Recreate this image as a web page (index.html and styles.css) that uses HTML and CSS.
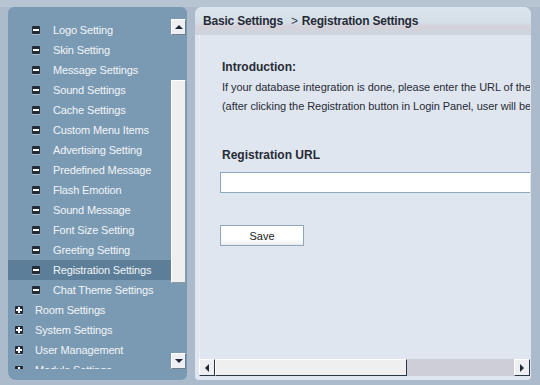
FILE: index.html
```html
<!DOCTYPE html>
<html lang="en">
<head>
  <meta charset="UTF-8">
  <title>Registration Settings</title>
  <link rel="stylesheet" href="styles.css">
</head>
<body>
  <div class="admin">
    <!-- left tree menu -->
    <div class="side">
      <div class="tree">
        <div class="row sub"><span class="ico minus"></span>Logo Setting</div>
        <div class="row sub"><span class="ico minus"></span>Skin Setting</div>
        <div class="row sub"><span class="ico minus"></span>Message Settings</div>
        <div class="row sub"><span class="ico minus"></span>Sound Settings</div>
        <div class="row sub"><span class="ico minus"></span>Cache Settings</div>
        <div class="row sub"><span class="ico minus"></span>Custom Menu Items</div>
        <div class="row sub"><span class="ico minus"></span>Advertising Setting</div>
        <div class="row sub"><span class="ico minus"></span>Predefined Message</div>
        <div class="row sub"><span class="ico minus"></span>Flash Emotion</div>
        <div class="row sub"><span class="ico minus"></span>Sound Message</div>
        <div class="row sub"><span class="ico minus"></span>Font Size Setting</div>
        <div class="row sub"><span class="ico minus"></span>Greeting Setting</div>
        <div class="row sub active"><span class="ico minus"></span>Registration Settings</div>
        <div class="row sub"><span class="ico minus"></span>Chat Theme Settings</div>
        <div class="row"><span class="ico plus"></span>Room Settings</div>
        <div class="row"><span class="ico plus"></span>System Settings</div>
        <div class="row"><span class="ico plus"></span>User Management</div>
        <div class="row"><span class="ico plus"></span>Module Settings</div>
      </div>
      <div class="vscroll">
        <div class="sbtn"><span class="arr up"></span></div>
        <div class="vtrack"><div class="vthumb"></div></div>
        <div class="sbtn"><span class="arr down"></span></div>
      </div>
    </div>

    <!-- main panel -->
    <div class="main">
      <div class="crumb"><b>Basic Settings</b><span class="sep">&gt;</span><b>Registration Settings</b></div>
      <div class="body">
        <div class="content">
          <div class="inner">
            <h3>Introduction:</h3>
            <p>If your database integration is done, please enter the URL of the registration page below.<br>(after clicking the Registration button in Login Panel, user will be redirected to this page)</p>
            <h3 class="label">Registration URL</h3>
            <input class="url" type="text">
            <button class="save">Save</button>
          </div>
        </div>
        <div class="hscroll">
          <div class="sbtn"><span class="arr left"></span></div>
          <div class="hthumb"></div>
          <div class="htrack"></div>
          <div class="sbtn"><span class="arr right"></span></div>
        </div>
      </div>
    </div>
  </div>
</body>
</html>
```

FILE: styles.css
```css
* { box-sizing: border-box; }
body {
  margin: 0;
  width: 540px;
  height: 385px;
  overflow: hidden;
  font-family: 'Liberation Sans', Arial, sans-serif;
  font-size: 11px;
  background: linear-gradient(#b7c5d3 0, #b7c5d3 7px, #abbbcb 7px);
}
.admin {
  display: flex;
  gap: 8px;
  padding: 7px 9px 5px 8px;
  height: 385px;
}

/* left menu */
.side {
  width: 179px;
  background: #7a9ab3;
  border-radius: 6px 6px 6px 8px;
  display: flex;
  padding: 12px 1px 11px 0;
}
.tree {
  flex: 1;
  overflow: hidden;
  padding-top: 1px;
}
.row {
  height: 20px;
  display: flex;
  align-items: center;
  color: #f2f5f8;
  padding-left: 7px;
  white-space: nowrap;
  letter-spacing: -0.15px;
}
.row.sub { padding-left: 24px; }
.row.active { background: #5c7e99; }
.ico {
  position: relative;
  width: 8px;
  height: 8px;
  background: #262a35;
  border-radius: 1px;
  margin-right: 12px;
  box-shadow: 0 1px 0 #a9bccb;
  flex: none;
}
.row.sub .ico { margin-right: 13px; }
.ico::before {
  content: "";
  position: absolute;
  left: 1px;
  top: 3px;
  width: 6px;
  height: 2px;
  background: #fff;
}
.ico.plus::after {
  content: "";
  position: absolute;
  left: 3px;
  top: 1px;
  width: 2px;
  height: 6px;
  background: #fff;
}

/* scrollbars */
.vscroll {
  width: 15px;
  display: flex;
  flex-direction: column;
}
.sbtn {
  width: 15px;
  height: 16px;
  background: #eeeff2;
  border-top: 1px solid #fff;
  border-left: 1px solid #fff;
  border-right: 1px solid #6f7f8f;
  border-bottom: 1px solid #6f7f8f;
  display: flex;
  align-items: center;
  justify-content: center;
  flex: none;
}
.vtrack {
  flex: 1;
  padding-top: 45px;
}
.vthumb {
  height: 203px;
  background: #efefef;
  border-top: 1px solid #fff;
  border-left: 1px solid #fff;
  border-right: 1px solid #8c99a6;
  border-bottom: 1px solid #8c99a6;
}
.arr {
  width: 0;
  height: 0;
  border: 4px solid transparent;
}
.arr.up { border-bottom-color: #1e2733; border-top-width: 0; }
.arr.down { border-top-color: #1e2733; border-bottom-width: 0; }
.arr.left { border-right-color: #1e2733; border-left-width: 0; }
.arr.right { border-left-color: #1e2733; border-right-width: 0; }

/* main panel */
.main {
  flex: 1;
  display: flex;
  flex-direction: column;
  border-radius: 7px 7px 4px 4px;
  overflow: hidden;
  background: #dfe6ef;
}
.crumb {
  height: 28px;
  padding: 7px 0 0 8px;
  color: #272b36;
  font-size: 12px;
  letter-spacing: -0.2px;
  background: linear-gradient(#dce5ed, #d5dfe8 55%, #d6d1d9 70%, #ccd6e0 100%);
  white-space: nowrap;
}
.crumb .sep {
  margin: 0 4px 0 8px;
  color: #3a404c;
}
.body {
  flex: 1;
  display: flex;
  flex-direction: column;
  padding: 0 1px 4px 4px;
  min-height: 0;
}
.content {
  flex: 1;
  overflow: hidden;
  border-left: 1px dotted #f2f5f9;
}
.inner {
  padding: 24px 0 0 22px;
  width: 420px;
  color: #272b36;
}
h3 {
  margin: 0;
  font-size: 12px;
  line-height: 16px;
}
p {
  margin: 3px 0 0;
  line-height: 19px;
  white-space: nowrap;
  letter-spacing: -0.05px;
}
h3.label { margin-top: 31px; }
.url {
  display: block;
  margin: 9px 0 0 -2px;
  width: 360px;
  height: 21px;
  border: 1px solid #8ea7bb;
  background: #fff;
}
.save {
  display: block;
  margin: 32px 0 0 -2px;
  width: 84px;
  height: 21px;
  padding: 0;
  font-family: inherit;
  font-size: 11px;
  color: #222;
  border: 1px solid #8ea7bb;
  background: linear-gradient(#fff 70%, #e9ecef);
}
.hscroll {
  height: 17px;
  display: flex;
}
.hscroll .sbtn {
  width: 16px;
  height: 17px;
  border-right-color: #2a3644;
  border-bottom-color: #2a3644;
}
.hthumb {
  width: 192px;
  background: #efefef;
  border-top: 1px solid #fff;
  border-left: 1px solid #fff;
  border-right: 1px solid #2a3644;
  border-bottom: 1px solid #2a3644;
}
.htrack {
  flex: 1;
  background: #cdced7;
}
```
